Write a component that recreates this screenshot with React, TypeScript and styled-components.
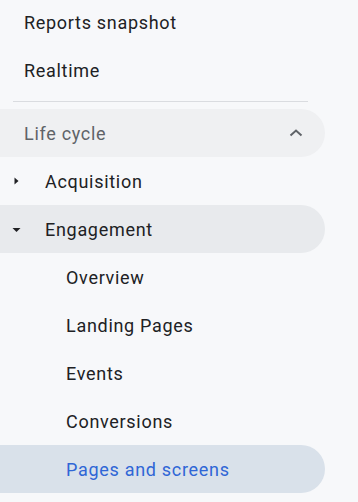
import React from "react";
import styled, { createGlobalStyle } from "styled-components";

const Global = createGlobalStyle`
  html, body { margin: 0; padding: 0; background: #f7f8fa; }
  body { font-family: Roboto, "Noto Sans", Arial, sans-serif; -webkit-font-smoothing: antialiased; }
`;

const Nav = styled.nav`
  display: flex;
  flex-direction: column;
  margin-top: -2px;
  width: 358px;
`;

const Row = styled.div<{ $indent: number; $bg?: string; $color?: string }>`
  display: flex;
  align-items: center;
  height: 48px;
  width: 325px;
  box-sizing: border-box;
  padding-left: ${(p) => p.$indent}px;
  padding-right: 22px;
  border-radius: 0 24px 24px 0;
  background: ${(p) => p.$bg || "transparent"};
  color: ${(p) => p.$color || "#202124"};
  font-size: 18px;
  letter-spacing: 0.7px;
  position: relative;
`;

const Label = styled.span`
  flex: 1;
  white-space: nowrap;
`;

const Divider = styled.hr`
  border: 0;
  height: 1px;
  background: #dadce0;
  margin: 7px 0 7px 13px;
  width: 295px;
`;

const Caret = styled.svg`
  position: absolute;
  left: 10px;
  top: 50%;
  transform: translateY(-50%);
`;

const Chevron = styled.svg`
  flex: none;
`;

const CaretRight = () => (
  <Caret width="12" height="12" viewBox="0 0 12 12">
    <path d="M4.5 2.5 L8.5 6 L4.5 9.5 Z" fill="#202124" />
  </Caret>
);

const CaretDown = () => (
  <Caret width="12" height="12" viewBox="0 0 12 12">
    <path d="M2.5 5 L10.5 5 L6.5 9 Z" fill="#202124" />
  </Caret>
);

const ChevronUp = () => (
  <Chevron width="14" height="10" viewBox="0 0 14 10">
    <path d="M1.5 7.5 L7 2.5 L12.5 7.5" fill="none" stroke="#5f6368" strokeWidth="2" />
  </Chevron>
);

export default function App() {
  return (
    <>
      <Global />
      <Nav>
        <Row $indent={24}><Label>Reports snapshot</Label></Row>
        <Row $indent={24}><Label>Realtime</Label></Row>
        <Divider />
        <Row $indent={24} $bg="#eff0f2" $color="#5f6368">
          <Label>Life cycle</Label>
          <ChevronUp />
        </Row>
        <Row $indent={45}>
          <CaretRight />
          <Label>Acquisition</Label>
        </Row>
        <Row $indent={45} $bg="#e8eaed">
          <CaretDown />
          <Label>Engagement</Label>
        </Row>
        <Row $indent={66}><Label>Overview</Label></Row>
        <Row $indent={66}><Label>Landing Pages</Label></Row>
        <Row $indent={66}><Label>Events</Label></Row>
        <Row $indent={66}><Label>Conversions</Label></Row>
        <Row $indent={66} $bg="#d9e1ea" $color="#2f66d6"><Label>Pages and screens</Label></Row>
      </Nav>
    </>
  );
}
